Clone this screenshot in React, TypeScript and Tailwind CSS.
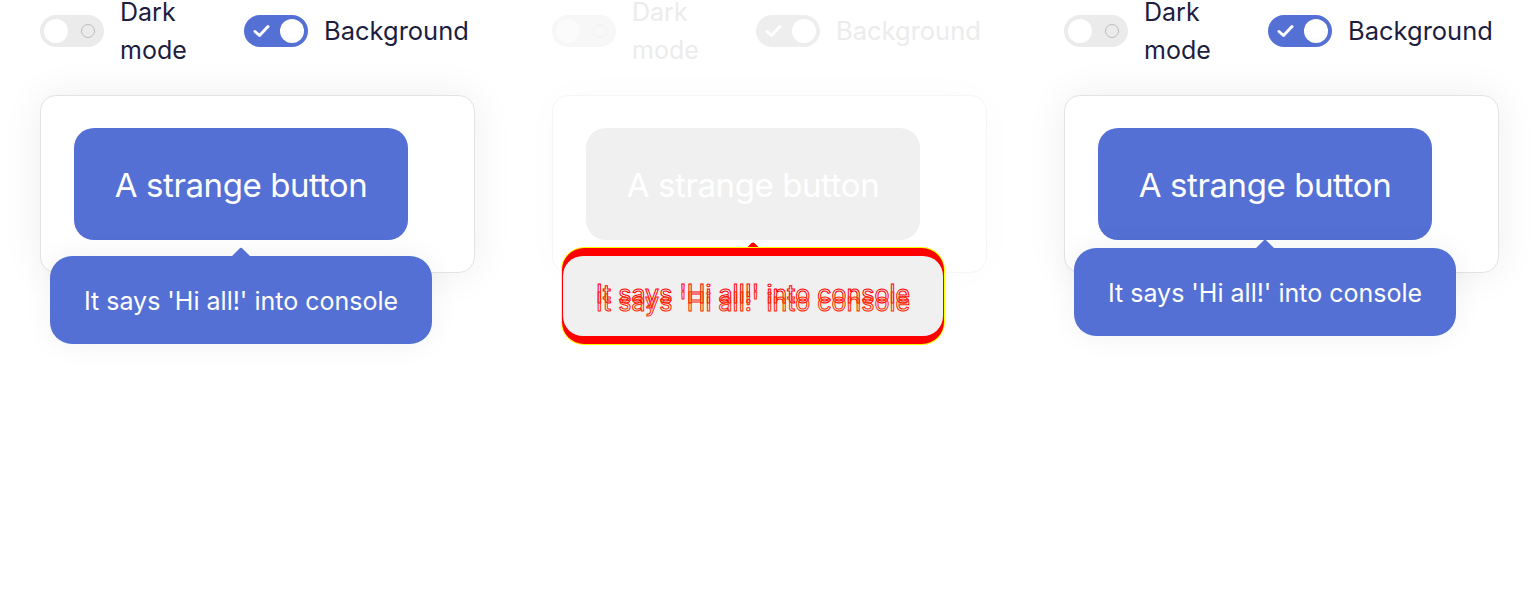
const font = { fontFamily: 'Inter, "Noto Sans", sans-serif' }

function Toggle({ checked, faded }: { checked: boolean; faded?: boolean }) {
  const track = checked
    ? faded
      ? 'bg-[#eeeeee]'
      : 'bg-[#5470d4]'
    : faded
      ? 'bg-[#f7f7f7]'
      : 'bg-[#ebebeb]'
  return (
    <div className={`relative h-8 w-16 shrink-0 rounded-full ${track}`}>
      {checked ? (
        <>
          <svg
            className="absolute left-[9px] top-[9px]"
            width="17"
            height="14"
            viewBox="0 0 17 14"
            fill="none"
          >
            <path
              d="M2 7.5 L6.5 11.5 L15 2.5"
              stroke="white"
              strokeWidth="3"
              strokeLinecap="round"
              strokeLinejoin="round"
            />
          </svg>
          <div className="absolute right-1 top-1 h-6 w-6 rounded-full bg-white" />
        </>
      ) : (
        <>
          <div
            className={`absolute left-1 top-1 h-6 w-6 rounded-full ${faded ? 'bg-[#fbfbfb]' : 'bg-white'}`}
          />
          <div
            className={`absolute right-[9px] top-[9px] h-[14px] w-[14px] rounded-full border-[1.5px] ${faded ? 'border-[#f0f0f0]' : 'border-[#bdbdbd]'}`}
          />
        </>
      )}
    </div>
  )
}

function Column({ variant }: { variant: 'normal' | 'faded' | 'lifted' }) {
  const faded = variant === 'faded'
  const text = faded ? 'text-[#ececec]' : 'text-[#1c1d3f]'
  const tipTop = variant === 'normal' ? 'top-[128px]' : 'top-[120px]'

  return (
    <div className="flex w-[512px] flex-col pl-10" style={font}>
      <div className="-mt-[7px] flex items-center gap-4">
        <label className="flex items-center gap-4">
          <Toggle checked={false} faded={faded} />
          <span className={`w-[108px] text-[25px] leading-[38px] ${text}`}>
            Dark mode
          </span>
        </label>
        <label className="flex items-center gap-4">
          <Toggle checked faded={faded} />
          <span className={`text-[25.5px] leading-[38px] ${text}`}>
            Background
          </span>
        </label>
      </div>

      <div
        className={`mt-[25.5px] w-[435px] rounded-2xl border bg-white py-8 pl-[33px] pr-8 ${faded ? 'border-[#f6f6f6] shadow-[0_0_40px_rgba(0,0,0,0.02)]' : 'border-[#e3e3e3] shadow-[0_0_40px_rgba(0,0,0,0.07)]'}`}
      >
        <div className="relative w-[334px]">
          <button
            className={`flex h-[112px] w-[334px] items-center justify-center rounded-[20px] pt-1 text-[33px] tracking-[-0.4px] text-white ${faded ? 'bg-[#f0f0f0]' : 'bg-[#5470d4]'}`}
          >
            A strange button
          </button>

          {faded ? (
            <div className="absolute -left-6 top-[120px] h-24 w-[382px]">
              <div className="absolute left-[183px] -top-[3px] h-4 w-4 rotate-45 rounded-[2px] bg-[#ff0000]" />
              <div className="absolute inset-0 rounded-[22px] bg-[#ff0000] shadow-[0_0_0_1px_#ffff00]" />
              <div className="absolute inset-x-[1px] top-2 bottom-2 rounded-[20px] bg-[#f0f0f0]" />
              <div className="absolute inset-x-0 top-[32px] text-center text-[25px] leading-[28px] text-transparent [-webkit-text-stroke:1px_#ff0000]">
                It says 'Hi all!' into console
              </div>
              <div className="absolute inset-x-0 top-[40px] text-center text-[25px] leading-[28px] text-transparent [-webkit-text-stroke:1px_#ff2a00]">
                It says 'Hi all!' into console
              </div>
            </div>
          ) : (
            <div
              className={`absolute -left-6 ${tipTop} flex h-[88px] w-[382px] items-center justify-center rounded-[22px] bg-[#5470d4] pt-1 shadow-[0_0_30px_rgba(0,0,0,0.06)]`}
            >
              <div className="absolute left-[184px] -top-[6px] h-[14px] w-[14px] rotate-45 rounded-[2px] bg-[#5470d4]" />
              <span className="relative text-[25px] text-white">
                It says 'Hi all!' into console
              </span>
            </div>
          )}
        </div>
      </div>
    </div>
  )
}

export default function App() {
  return (
    <div className="flex h-[600px] w-[1536px] overflow-hidden bg-white">
      <Column variant="normal" />
      <Column variant="faded" />
      <Column variant="lifted" />
    </div>
  )
}
